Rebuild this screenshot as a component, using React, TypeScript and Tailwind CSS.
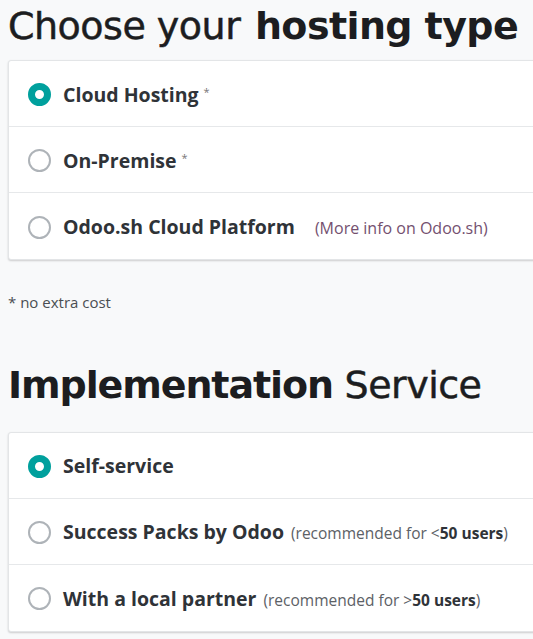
const hosting = [
  { label: "Cloud Hosting", star: true, checked: true },
  { label: "On-Premise", star: true },
  { label: "Odoo.sh Cloud Platform", link: "(More info on Odoo.sh)" },
];

const services = [
  { label: "Self-service", checked: true },
  { label: "Success Packs by Odoo", note: "<", users: "50 users" },
  { label: "With a local partner", note: ">", users: "50 users" },
];

function Radio({ checked }: { checked?: boolean }) {
  return checked ? (
    <span className="w-[23px] h-[23px] rounded-full border-[7px] border-[#00a09d] bg-white shrink-0" />
  ) : (
    <span className="w-[23px] h-[23px] rounded-full border-2 border-[#aeb3b8] bg-white shrink-0" />
  );
}

function Row({ checked, children }: { checked?: boolean; children: React.ReactNode }) {
  return (
    <div className="h-[66px] flex items-center gap-[12px] pl-[19px] pt-[2px] border-b border-[#e6e8ea] last:border-b-0">
      <Radio checked={checked} />
      <div className="flex items-baseline whitespace-nowrap">{children}</div>
    </div>
  );
}

export default function App() {
  return (
    <div className="min-h-[639px] bg-[#f8f9fa] pl-2 pt-[2px] overflow-hidden font-['Open_Sans',sans-serif] text-[#2f3338]">
      <h2 className="font-['DejaVu_Sans',sans-serif] text-[38px] leading-[48px] text-[#1c1d20] tracking-[-0.5px] whitespace-nowrap">
        <span className="[-webkit-text-stroke:0.5px_#1c1d20]">Choose your</span>{" "}
        <b className="ml-[3px] tracking-[-0.6px]">hosting type</b>
      </h2>

      <div className="mt-[10px] mr-[-10px] bg-white border border-[#e3e5e7] rounded-[3px] shadow-[0_1px_2px_rgba(0,0,0,0.18)]">
        {hosting.map((h) => (
          <Row key={h.label} checked={h.checked}>
            <span className="font-bold text-[19.5px]">{h.label}</span>
            {h.star && <sup className="ml-[5px] text-[11px] text-[#777]">*</sup>}
            {h.link && (
              <span className="ml-[20px] text-[16px] text-[#74506f]">{h.link}</span>
            )}
          </Row>
        ))}
      </div>

      <p className="mt-[31px] text-[15px] text-[#4a4e52]">* no extra cost</p>

      <h2 className="mt-[47px] font-['DejaVu_Sans',sans-serif] text-[38px] leading-[48px] text-[#1c1d20] tracking-[-0.5px] whitespace-nowrap">
        <b className="tracking-[-1.1px]">Implementation</b>{" "}
        <span className="[-webkit-text-stroke:0.5px_#1c1d20]">Service</span>
      </h2>

      <div className="mt-[23px] mr-[-10px] bg-white border border-[#e3e5e7] rounded-[3px] shadow-[0_1px_2px_rgba(0,0,0,0.18)]">
        {services.map((s) => (
          <Row key={s.label} checked={s.checked}>
            <span className="font-bold text-[19.5px]">{s.label}</span>
            {s.note && (
              <span className="ml-[7px] text-[15.5px] text-[#5c6166]">
                (recommended for {s.note}
                <b className="text-[#2f3338]">{s.users}</b>)
              </span>
            )}
          </Row>
        ))}
      </div>
    </div>
  );
}
